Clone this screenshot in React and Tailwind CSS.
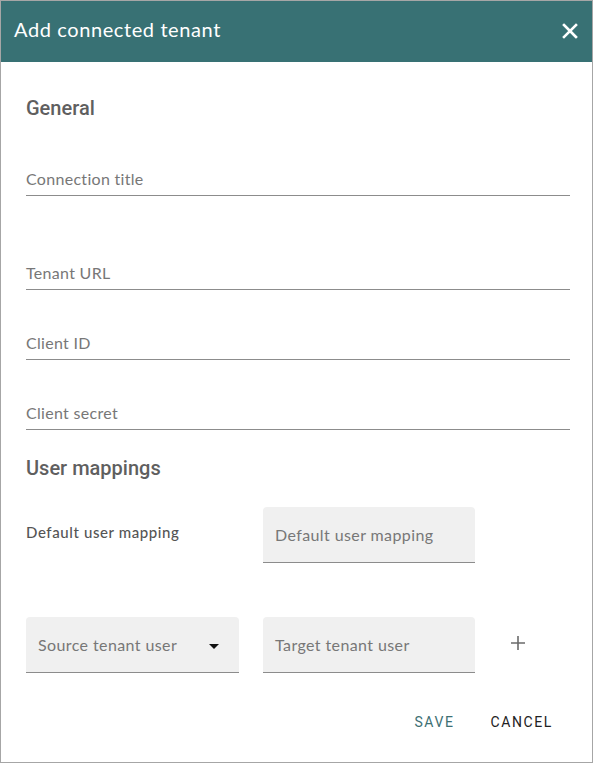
export default function App() {
  const body = { fontFamily: 'Lato, "Open Sans", sans-serif' }
  const heading = { fontFamily: 'Roboto, "Liberation Sans", sans-serif' }

  return (
    <div className="w-[593px] h-[763px] border border-[#a6a6a6] bg-white flex flex-col" style={body}>
      <div className="h-[61px] shrink-0 bg-[#387174] pl-[13px] pr-[14px] flex items-center justify-between">
        <span className="text-white text-[20px] leading-[24px] tracking-[0.6px] mt-[-5px]">Add connected tenant</span>
        <svg width="16" height="16" viewBox="0 0 16 16" className="mt-[-2px]">
          <path d="M2 2 L14 14 M14 2 L2 14" stroke="#fff" strokeWidth="2.6" strokeLinecap="square" />
        </svg>
      </div>

      <div className="pl-[25px] pr-[22px] flex flex-col">
        <h2 className="mt-[34px] text-[20px] leading-[24px] font-medium text-[#5f5f5f]" style={heading}>General</h2>

        <Field label="Connection title" className="mt-[49px]" />
        <Field label="Tenant URL" className="mt-[67px]" />
        <Field label="Client ID" className="mt-[43px]" />
        <Field label="Client secret" className="mt-[43px]" />

        <h2 className="mt-[26px] text-[20px] leading-[24px] font-medium text-[#5f5f5f]" style={heading}>User mappings</h2>

        <div className="mt-[27px] flex items-start gap-[24px]">
          <div className="w-[213px] pt-[15px] text-[15px] leading-[20px] tracking-[0.6px] text-[#555]" style={{ fontWeight: 500 }}>Default user mapping</div>
          <Filled label="Default user mapping" />
        </div>

        <div className="mt-[54px] flex items-start gap-[24px]">
          <div className="w-[213px] h-[56px] bg-[#f0f0f0] rounded-t-[4px] border-b border-[#8c8c8c] pl-[12px] pr-[20px] flex items-center justify-between">
            <span className="text-[16px] tracking-[0.4px] text-[#777]">Source tenant user</span>
            <svg width="10" height="5" viewBox="0 0 10 5" className="mt-[3px]">
              <path d="M0 0 L10 0 L5 5 Z" fill="#111" />
            </svg>
          </div>
          <Filled label="Target tenant user" />
          <div className="h-[56px] flex items-center pl-[11px]">
            <svg width="16" height="16" viewBox="0 0 16 16" className="mt-[-4px]">
              <path d="M8 1 V15 M1 8 H15" stroke="#6b6b6b" strokeWidth="1.6" />
            </svg>
          </div>
        </div>

        <div className="mt-[31px] flex justify-end gap-[18px] pr-[8px]" style={heading}>
          <button className="h-[36px] px-[9px] text-[14px] tracking-[1.6px] text-[#3d6f73]">SAVE</button>
          <button className="h-[36px] px-[9px] text-[14px] tracking-[1.6px] text-[#222]">CANCEL</button>
        </div>
      </div>
    </div>
  )
}

function Field({ label, className }) {
  return (
    <div className={`${className} border-b border-[#8c8c8c] pb-[6px]`}>
      <div className="text-[16px] leading-[20px] tracking-[0.3px] text-[#777]">{label}</div>
    </div>
  )
}

function Filled({ label }) {
  return (
    <div className="w-[212px] h-[56px] bg-[#f0f0f0] rounded-t-[4px] border-b border-[#8c8c8c] px-[12px] flex items-center">
      <span className="text-[16px] tracking-[0.4px] text-[#777]">{label}</span>
    </div>
  )
}
